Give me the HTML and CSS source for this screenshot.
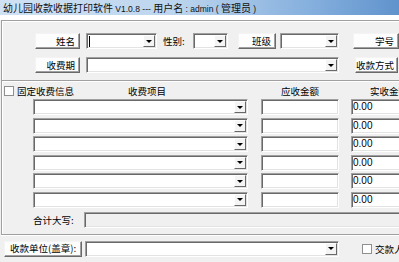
FILE: index.html
```html
<!DOCTYPE html>
<html lang="zh-CN">
<head>
    <meta charset="UTF-8">
    <title>幼儿园收款收据打印软件</title>
    <link rel="stylesheet" href="styles.css">
</head>
<body>
    <div class="window">
        <div class="titlebar">幼儿园收款收据打印软件<span class="latin"> V1.0.8 --- </span>用户名<span class="latin"> : admin ( </span>管理员<span class="latin"> )</span></div>
        <div class="frame-strip"></div>

        <!-- 查询条件 -->
        <div class="group query">
            <div class="row">
                <button class="btn">姓名</button>
                <div class="combo name-combo"><span class="caret"></span><span class="drop"></span></div>
                <span class="label sex-label">性别:</span>
                <div class="combo sex-combo"><span class="drop"></span></div>
                <button class="btn class-btn">班级</button>
                <div class="combo class-combo"><span class="drop"></span></div>
                <button class="btn id-btn">学号</button>
            </div>
            <div class="row">
                <button class="btn">收费期</button>
                <div class="combo period-combo"><span class="drop"></span></div>
                <button class="btn pay-btn">收款方式</button>
            </div>
        </div>

        <!-- 收费项目 -->
        <div class="group items">
            <div class="items-head">
                <label class="check"><span class="box"></span>固定收费信息</label>
                <span class="head-item">收费项目</span>
                <span class="head-due">应收金额</span>
                <span class="head-paid">实收金额</span>
            </div>
            <div class="items-grid">
                <div class="combo item-combo"><span class="drop"></span></div>
                <div class="field due"></div>
                <div class="field paid">0.00</div>

                <div class="combo item-combo"><span class="drop"></span></div>
                <div class="field due"></div>
                <div class="field paid">0.00</div>

                <div class="combo item-combo"><span class="drop"></span></div>
                <div class="field due"></div>
                <div class="field paid">0.00</div>

                <div class="combo item-combo"><span class="drop"></span></div>
                <div class="field due"></div>
                <div class="field paid">0.00</div>

                <div class="combo item-combo"><span class="drop"></span></div>
                <div class="field due"></div>
                <div class="field paid">0.00</div>

                <div class="combo item-combo"><span class="drop"></span></div>
                <div class="field due"></div>
                <div class="field paid">0.00</div>
            </div>
            <div class="total-row">
                <span class="label total-label">合计大写:</span>
                <div class="field disabled total"></div>
            </div>
        </div>

        <div class="footer-row">
            <button class="btn unit-btn">收款单位(盖章):</button>
            <div class="combo unit-combo"><span class="drop"></span></div>
            <label class="check payer"><span class="box"></span>交款人</label>
        </div>
    </div>
</body>
</html>
```

FILE: styles.css
```css
* {
    margin: 0;
    padding: 0;
    box-sizing: border-box;
}

body {
    font-family: "Noto Sans CJK SC", "Liberation Sans", sans-serif;
    font-size: 9.5px;
    color: #000;
    background: #f0f0f0;
    overflow: hidden;
}

.window {
    width: 440px;
    height: 262px;
}

.titlebar {
    height: 15px;
    line-height: 15px;
    padding-left: 3px;
    font-size: 10px;
    white-space: nowrap;
    color: #111;
    background: linear-gradient(to right, #d0e1f3 0%, #bcd5ee 40%, #86b0de 70%, #4f86c4 100%);
}

.titlebar .latin {
    font-family: "Liberation Sans", sans-serif;
    font-size: 8.5px;
}

.frame-strip {
    height: 5px;
    background: #fff;
}

/* group box with etched edge */
.group {
    margin-left: 1px;
    border-top: 1px solid #a0a0a0;
    border-left: 1px solid #a0a0a0;
    box-shadow: inset 1px 1px 0 #fff;
}

.query {
    padding: 12px 0 7px 33px;
}

.row {
    display: flex;
    align-items: center;
    height: 16px;
}

.row + .row {
    margin-top: 8px;
}

.btn {
    flex: none;
    width: 45px;
    height: 16px;
    padding-right: 4px;
    font: inherit;
    line-height: 13px;
    text-align: right;
    white-space: nowrap;
    background: #fdfdfd;
    border: 1px solid;
    border-color: #f4f4f4 #696969 #696969 #f4f4f4;
    box-shadow: inset -1px -1px 0 #a0a0a0;
}

.label {
    white-space: nowrap;
    line-height: 16px;
}

.combo,
.field {
    flex: none;
    height: 16px;
    background: #fff;
    border: 1px solid;
    border-color: #a0a0a0 #fff #fff #a0a0a0;
    box-shadow: inset 1px 1px 0 #696969, inset -1px -1px 0 #e3e3e3;
}

.combo {
    display: flex;
    align-items: center;
    justify-content: flex-end;
    padding: 1px;
}

.drop {
    width: 12px;
    height: 12px;
    display: flex;
    align-items: center;
    justify-content: center;
    background: #f4f4f4;
    border: 1px solid;
    border-color: #fff #696969 #696969 #fff;
}

.drop::after {
    content: "";
    border-left: 3px solid transparent;
    border-right: 3px solid transparent;
    border-top: 3px solid #000;
}

.caret {
    width: 1px;
    height: 11px;
    margin-left: 1px;
    margin-right: auto;
    background: #000;
}

.name-combo { width: 71px; margin-left: 6px; }
.sex-label { width: 30px; margin-left: 6px; }
.sex-combo { width: 35px; }
.class-btn { width: 38px; margin-left: 10px; }
.class-combo { width: 59px; margin-left: 4px; }
.id-btn { width: 46px; margin-left: 14px; }
.period-combo { width: 253px; margin-left: 6px; }
.pay-btn { width: 43px; margin-left: 16px; }

/* fee items */
.items {
    padding: 4px 0 6px 0;
    border-bottom: 1px solid #a0a0a0;
    box-shadow: inset 1px 1px 0 #fff, 0 1px 0 #fff;
}

.items-head,
.items-grid {
    display: grid;
    grid-template-columns: 31px 215px 13px 78px 12px 76px;
}

.items-head {
    height: 12px;
    line-height: 12px;
    margin-bottom: 2px;
    white-space: nowrap;
}

.check {
    display: flex;
    align-items: center;
    white-space: nowrap;
}

.items-head .check {
    grid-column: 1;
    margin-left: 2px;
}

.box {
    flex: none;
    width: 10px;
    height: 10px;
    margin-right: 3px;
    background: #fff;
    border: 1px solid #8e8f8f;
}

.head-item {
    grid-column: 2;
    text-align: center;
    padding-left: 13px;
}

.head-due {
    grid-column: 4;
    text-align: center;
}

.head-paid {
    grid-column: 6;
    text-align: center;
}

.items-grid {
    row-gap: 2.6px;
}

.item-combo { grid-column: 2; }
.due { grid-column: 4; }

.paid {
    grid-column: 6;
    padding-left: 1px;
    font-family: "Liberation Sans", sans-serif;
    font-size: 10px;
    line-height: 13px;
}

.total-row {
    display: flex;
    align-items: center;
    margin-top: 4px;
    padding-left: 31px;
}

.total-label {
    width: 51px;
}

.total {
    width: 330px;
}

.field.disabled {
    background: #f0f0f0;
}

.footer-row {
    display: flex;
    align-items: center;
    height: 16px;
    margin-top: 6px;
    padding-left: 4px;
}

.unit-btn {
    width: 78px;
    text-align: center;
    padding: 0;
}

.unit-combo {
    width: 254px;
    margin-left: 3px;
}

.payer {
    margin-left: 23px;
}
```
